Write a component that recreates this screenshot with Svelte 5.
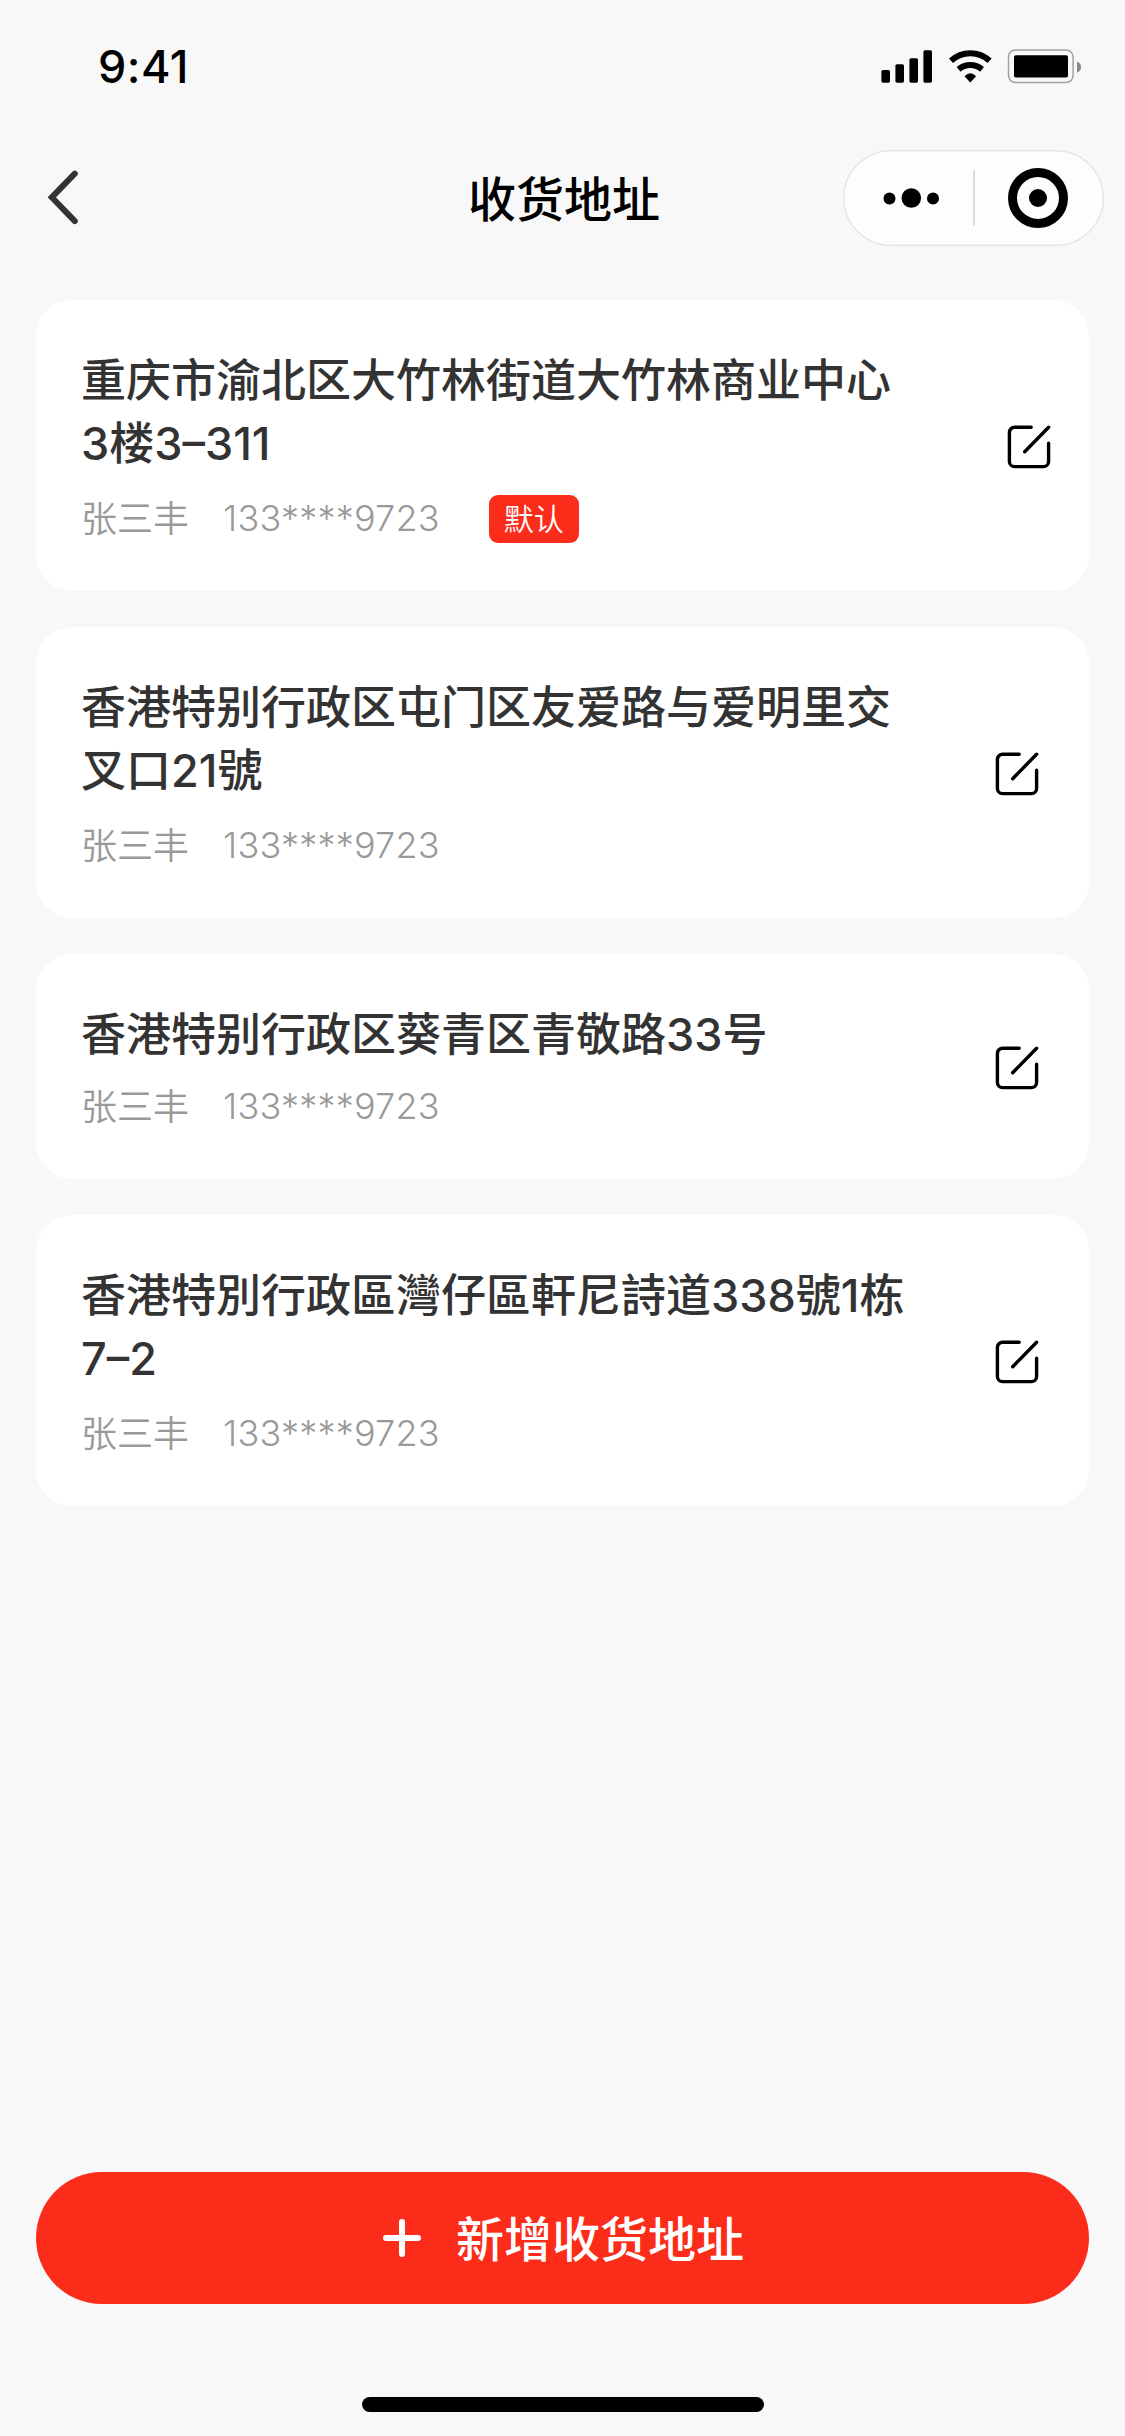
<script>
    let addresses = $state([
        { id: 1, address: '重庆市渝北区大竹林街道大竹林商业中心3楼3–311', name: '张三丰', phone: '133****9723', isDefault: true },
        { id: 2, address: '香港特别行政区屯门区友爱路与爱明里交叉口21號', name: '张三丰', phone: '133****9723', isDefault: false },
        { id: 3, address: '香港特别行政区葵青区青敬路33号', name: '张三丰', phone: '133****9723', isDefault: false },
        { id: 4, address: '香港特別行政區灣仔區軒尼詩道338號1栋7–2', name: '张三丰', phone: '133****9723', isDefault: false }
    ]);

    // Addresses longer than one line get slightly more room above the contact row
    const LINE_CHARS = 18;
</script>

<div class="page">
    <div class="status-bar">
        <span class="time">9:41</span>
        <svg class="status-icons" viewBox="0 0 204 36" width="204" height="36">
            <!-- Signal -->
            <rect x="1.4" y="22" width="8.6" height="12.7" rx="1.6" />
            <rect x="15.4" y="16.2" width="8.6" height="18.5" rx="1.6" />
            <rect x="29.4" y="10.2" width="8.6" height="24.5" rx="1.6" />
            <rect x="43.4" y="2.2" width="8.6" height="32.5" rx="1.6" />
            <!-- Wifi -->
            <path d="M71 12.8a28.4 28.4 0 0 1 38.6 0" fill="none" stroke="#000" stroke-width="6" />
            <path d="M78.6 21.4a18 18 0 0 1 23.4 0" fill="none" stroke="#000" stroke-width="6" />
            <path d="M84.5 28.2q5.8-6 11.6 0L90.3 34.6z" />
            <!-- Battery -->
            <rect x="128.5" y="1.9" width="64.6" height="32.6" rx="7" fill="none" stroke="#a0a0a0" stroke-width="1.5" />
            <rect x="134" y="7.2" width="54" height="22.4" rx="1.8" />
            <path d="M197 13.4c5.4 2 5.4 9 0 11.2z" fill="#8a8a8a" />
        </svg>
    </div>

    <header class="nav-bar">
        <button class="back-btn" aria-label="返回">
            <svg viewBox="0 0 36 60" width="36" height="60">
                <path d="M28.8 5.6 5.8 29.3l23 23.8" fill="none" stroke="#333" stroke-width="6" stroke-linecap="round" stroke-linejoin="miter" />
            </svg>
        </button>
        <h1>收货地址</h1>
        <div class="capsule">
            <svg viewBox="0 0 261 96" width="261" height="96">
                <rect x="0.75" y="0.75" width="259.5" height="94.5" rx="47.25" fill="#fdfdfd" stroke="#e5e5e5" stroke-width="1.5" />
                <circle cx="46.5" cy="48.5" r="6" />
                <circle cx="68.3" cy="48" r="9.8" />
                <circle cx="90" cy="48.5" r="6" />
                <path d="M131 20v55.5" stroke="#d0d0d0" stroke-width="1.5" />
                <circle cx="195" cy="48" r="25.5" fill="none" stroke="#000" stroke-width="9" />
                <circle cx="195" cy="48" r="9" />
            </svg>
        </div>
    </header>

    <main class="address-list">
        {#each addresses as item (item.id)}
            <section class="address-card" class:multiline={item.address.length > LINE_CHARS}>
                <div class="info">
                    <h2>{item.address}</h2>
                    <div class="contact">
                        <span class="name">{item.name}</span>
                        <span class="phone">{item.phone}</span>
                        {#if item.isDefault}
                            <span class="tag">默认</span>
                        {/if}
                    </div>
                </div>
                <button class="edit-btn" class:shifted={item.isDefault} aria-label="编辑">
                    <svg viewBox="0 0 48 48" width="48" height="48">
                        <path d="M26.2 4.2H9.6a5.2 5.2 0 0 0-5.2 5.2v29a5.2 5.2 0 0 0 5.2 5.2h28.8a5.2 5.2 0 0 0 5.2-5.2V20.2M19.7 28.7 43.6 4.2" />
                    </svg>
                </button>
            </section>
        {/each}
    </main>

    <footer>
        <button class="add-btn">
            <svg viewBox="0 0 48 48" width="48" height="48">
                <path d="M24 8v32M8 24h32" stroke="#fff" stroke-width="6" stroke-linecap="round" />
            </svg>
            <span>新增收货地址</span>
        </button>
        <div class="home-indicator"></div>
    </footer>
</div>

<style>
    :global(body) {
        background: #f8f8f8;
    }
    .page {
        box-sizing: border-box;
        width: 1125px;
        height: 2436px;
        display: flex;
        flex-direction: column;
        background: #f8f8f8;
        font-family: Inter, "Noto Sans CJK SC", sans-serif;
        overflow: hidden;
    }
    button {
        display: flex;
        padding: 0;
        border: none;
        background: none;
        font-family: inherit;
        cursor: pointer;
    }
    svg {
        display: block;
    }

    .status-bar {
        box-sizing: border-box;
        height: 132px;
        display: flex;
        justify-content: space-between;
        align-items: flex-start;
        padding: 48px 41px 0 98px;
    }
    .time {
        font-size: 45px;
        line-height: 38px;
        font-weight: 450;
        letter-spacing: 0.5px;
        color: #000;
    }

    .nav-bar {
        box-sizing: border-box;
        height: 132px;
        display: grid;
        grid-template-columns: 261px 1fr 261px;
        align-items: center;
        padding: 0 21px 0 24px;
    }
    .back-btn {
        padding-left: 22px;
    }
    .nav-bar h1 {
        margin: 0;
        padding-top: 3px;
        text-align: center;
        font-size: 48px;
        line-height: 66px;
        font-weight: 500;
        color: #000;
    }

    .address-list {
        flex: 1;
        display: flex;
        flex-direction: column;
        gap: 36px;
        padding: 36px 36px 0;
    }
    .address-card {
        display: flex;
        justify-content: space-between;
        align-items: center;
        padding: 49px 48px 48px 45px;
        border-radius: 36px;
        background: #fff;
    }
    .info {
        width: 825px;
    }
    .info h2 {
        margin: 0;
        font-size: 45px;
        line-height: 63px;
        font-weight: 450;
        color: #333;
    }
    .contact {
        display: flex;
        align-items: center;
        height: 48px;
        margin-top: 17px;
        font-size: 36px;
        line-height: 48px;
        color: #999;
    }
    .multiline .contact {
        margin-top: 20px;
    }
    .name {
        font-family: "Noto Sans CJK SC", sans-serif;
        font-weight: 350;
        margin-top: -6px;
    }
    .phone {
        margin: -2px 0 0 34px;
        font-weight: 300;
        letter-spacing: 0.2px;
    }
    .tag {
        width: 90px;
        margin-left: 49px;
        border-radius: 9px;
        background: #fc2c1b;
        color: #fff;
        font-size: 30px;
        font-weight: 350;
        line-height: 48px;
        text-align: center;
    }
    .edit-btn {
        margin-top: 2px;
    }
    .edit-btn.shifted {
        margin-right: -12px;
    }
    .edit-btn path {
        fill: none;
        stroke: #000;
        stroke-width: 3.4;
        stroke-linecap: round;
        stroke-linejoin: round;
    }

    footer {
        display: flex;
        flex-direction: column;
        align-items: center;
        padding: 0 36px 24px;
    }
    .add-btn {
        box-sizing: border-box;
        width: 100%;
        height: 132px;
        align-items: center;
        justify-content: center;
        gap: 30px;
        padding-right: 3px;
        border-radius: 66px;
        background: #fc2c1b;
        color: #fff;
        font-size: 48px;
        font-weight: 500;
    }
    .add-btn span {
        margin-top: -5px;
    }
    .home-indicator {
        width: 402px;
        height: 15px;
        margin-top: 93px;
        border-radius: 8px;
        background: #000;
    }
</style>
